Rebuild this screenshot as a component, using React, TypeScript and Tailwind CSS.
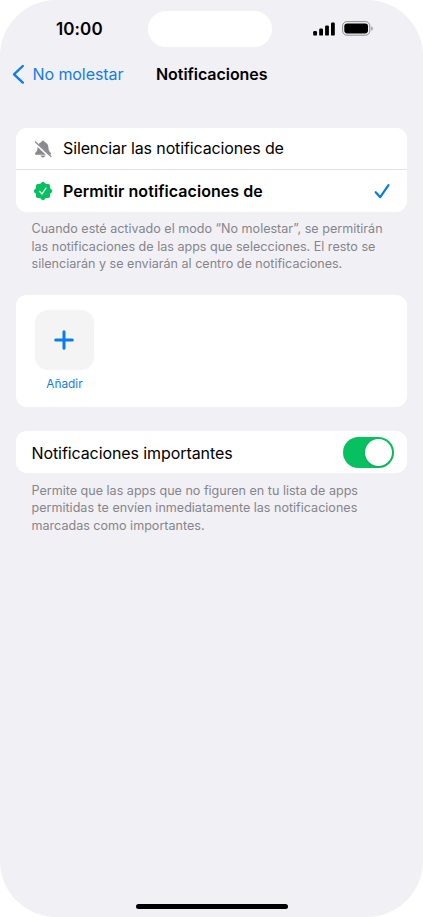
import React, { useState } from 'react';

type Mode = 'silence' | 'allow';

function SignalIcon() {
  return (
    <svg width="22" height="14" viewBox="0 0 22 14" fill="black">
      <rect x="0.200" y="9" width="3.800" height="4.600" rx="1.200" />
      <rect x="6.200" y="6.500" width="3.800" height="7.100" rx="1.200" />
      <rect x="12.100" y="3.500" width="3.800" height="10.100" rx="1.200" />
      <rect x="18" y="0.600" width="3.800" height="13" rx="1.200" />
    </svg>
  );
}

function BatteryIcon() {
  return (
    <svg width="32" height="15" viewBox="0 0 32 15">
      <rect x="0.600" y="0.600" width="27.200" height="13.600" rx="4.300" fill="none" stroke="#8e8e93" strokeWidth="1" />
      <rect x="2.300" y="2.400" width="23.700" height="10" rx="2.800" fill="black" />
      <path d="M29.200 5.200c1.100.4 1.700 1.300 1.700 2.300s-.6 1.900-1.700 2.300z" fill="#a0a0a4" />
    </svg>
  );
}

function BellSlashIcon() {
  return (
    <svg width="18" height="18" viewBox="0 0 18 18" fill="#8a8a8e">
      <path d="M9 0.800c-.9 0-1.700.6-1.900 1.500C4.800 3 3.700 5 3.600 7.300c-.1 2.700-.7 3.900-1.800 5-.5.500-.8.900-.8 1.400 0 .6.500 1 1.200 1h13.600c.7 0 1.200-.4 1.200-1 0-.5-.3-.9-.8-1.400-1.100-1.100-1.700-2.300-1.800-5-.1-2.300-1.200-4.300-3.500-5C10.700 1.400 9.900.8 9 .8z" />
      <path d="M6.500 15.600h5c-.3 1.100-1.300 1.800-2.500 1.800s-2.200-.7-2.500-1.800z" />
      <path d="M0.800 2.400L16.200 17.200" stroke="white" strokeWidth="2.600" />
      <path d="M1.200 1.800L17 16.500" stroke="#8a8a8e" strokeWidth="1.200" strokeLinecap="round" />
    </svg>
  );
}

function SealIcon() {
  return (
    <svg width="20" height="20" viewBox="0 0 20 20">
      <g fill="#07c160">
        <rect x="3" y="3" width="14" height="14" rx="1.700" />
        <rect x="3" y="3" width="14" height="14" rx="1.700" transform="rotate(45 10 10)" />
      </g>
      <path d="M6.700 10.500l2.300 2.500 4-6" fill="none" stroke="white" strokeWidth="1.200" strokeLinecap="round" strokeLinejoin="round" />
    </svg>
  );
}

interface ModeRowProps {
  icon: React.ReactNode;
  label: React.ReactNode;
  selected: boolean;
  onSelect: () => void;
}

function ModeRow({ icon, label, selected, onSelect }: ModeRowProps) {
  return (
    <button onClick={onSelect} className="w-full h-[42px] flex items-center pl-[17px] pr-4 text-left">
      <span className="w-5 flex justify-center mr-[10px]">{icon}</span>
      <span className="flex-1 whitespace-nowrap">{label}</span>
      {selected && (
        <svg width="17" height="17" viewBox="0 0 17 17" fill="none" stroke="#087be8" strokeWidth="2.200" strokeLinecap="round" strokeLinejoin="round">
          <path d="M1.700 9.200l4.500 5L14.500 2.200" />
        </svg>
      )}
    </button>
  );
}

function Footnote({ lines }: { lines: string[] }) {
  return (
    <div className="pl-[15.5px] text-[12.57px] leading-[17.7px] text-[#85858b] whitespace-nowrap">
      {lines.map((line) => (
        <p key={line}>{line}</p>
      ))}
    </div>
  );
}

export default function App() {
  const [mode, setMode] = useState<Mode>('allow');
  const [important, setImportant] = useState(true);

  return (
    <div className="bg-white font-['Inter','Liberation_Sans',sans-serif] text-black">
      <div className="w-[423px] h-[917px] bg-[#f1f0f5] rounded-[56px] overflow-hidden flex flex-col">
        {/* Status bar */}
        <header className="h-[58px] shrink-0 flex items-center pl-14">
          <div className="w-[92px] text-[17px] font-semibold tracking-[0.1px] pt-px">10:00</div>
          <div className="w-[124px] h-9 rounded-full bg-white" />
          <div className="ml-[41px] flex items-center gap-[7px] pb-px">
            <SignalIcon />
            <BatteryIcon />
          </div>
        </header>

        {/* Navigation */}
        <nav className="h-[33px] shrink-0 flex items-center pl-3 text-base pb-[2px]">
          <button className="w-[144px] flex items-center text-[#147ce5]">
            <svg width="13" height="20" viewBox="0 0 13 20" fill="none" stroke="currentColor" strokeWidth="2.400" strokeLinecap="round" strokeLinejoin="round">
              <path d="M10.800 2L2 10.300 10.800 18.600" />
            </svg>
            <span className="ml-[7.5px] whitespace-nowrap tracking-[-0.08px]">No molestar</span>
          </button>
          <h1 className="font-semibold tracking-[-0.05px]">Notificaciones</h1>
        </nav>

        <main className="flex-1 px-4 pt-[37px]">
          <section className="bg-white rounded-[11px] divide-y divide-[#e2e2e5] h-[84px]">
            <ModeRow
              icon={<BellSlashIcon />}
              label={<span className="block pb-[2px] text-base tracking-[-0.13px]">Silenciar las notificaciones de</span>}
              selected={mode === 'silence'}
              onSelect={() => setMode('silence')}
            />
            <ModeRow
              icon={<SealIcon />}
              label={<span className="block text-base font-semibold tracking-[0.06px]">Permitir notificaciones de</span>}
              selected={mode === 'allow'}
              onSelect={() => setMode('allow')}
            />
          </section>
          <div className="h-[83px] pt-2">
            <Footnote
              lines={[
                'Cuando esté activado el modo “No molestar”, se permitirán',
                'las notificaciones de las apps que selecciones. El resto se',
                'silenciarán y se enviarán al centro de notificaciones.',
              ]}
            />
          </div>

          <section className="bg-white rounded-[11px] h-28 pl-[19px] pt-[15px]">
            <button className="w-[59px] flex flex-col items-center">
              <span className="w-[59px] h-[60px] rounded-[13px] bg-[#f4f4f5] flex items-center justify-center">
                <svg width="21" height="20" viewBox="0 0 21 20" stroke="#087cec" strokeWidth="3" strokeLinecap="round">
                  <path d="M10 1.700v16.600M1.700 10h16.600" />
                </svg>
              </span>
              <span className="mt-[6px] text-[11.8px] leading-4 text-[#147ce5]">Añadir</span>
            </button>
          </section>

          <section className="mt-6 bg-white rounded-[11px] h-[42px] pl-[15.5px] pr-[13px] flex items-center justify-between">
            <span className="text-base tracking-[-0.09px] pt-[2px]">Notificaciones importantes</span>
            <button
              role="switch"
              aria-checked={important}
              aria-label="Notificaciones importantes"
              onClick={() => setImportant(!important)}
              className={`w-[51px] h-[31px] rounded-full p-[2px] flex items-center ${
                important ? 'bg-[#07c160] justify-end' : 'bg-[#e9e9eb] justify-start'
              }`}
            >
              <span className="size-[27px] rounded-full bg-white shadow-sm" />
            </button>
          </section>
          <div className="pt-[8.5px]">
            <Footnote
              lines={[
                'Permite que las apps que no figuren en tu lista de apps',
                'permitidas te envíen inmediatamente las notificaciones',
                'marcadas como importantes.',
              ]}
            />
          </div>
        </main>

        <div className="h-[13px] shrink-0 flex justify-center">
          <div className="w-[152px] h-[5px] rounded-full bg-black" />
        </div>
      </div>
    </div>
  );
}
